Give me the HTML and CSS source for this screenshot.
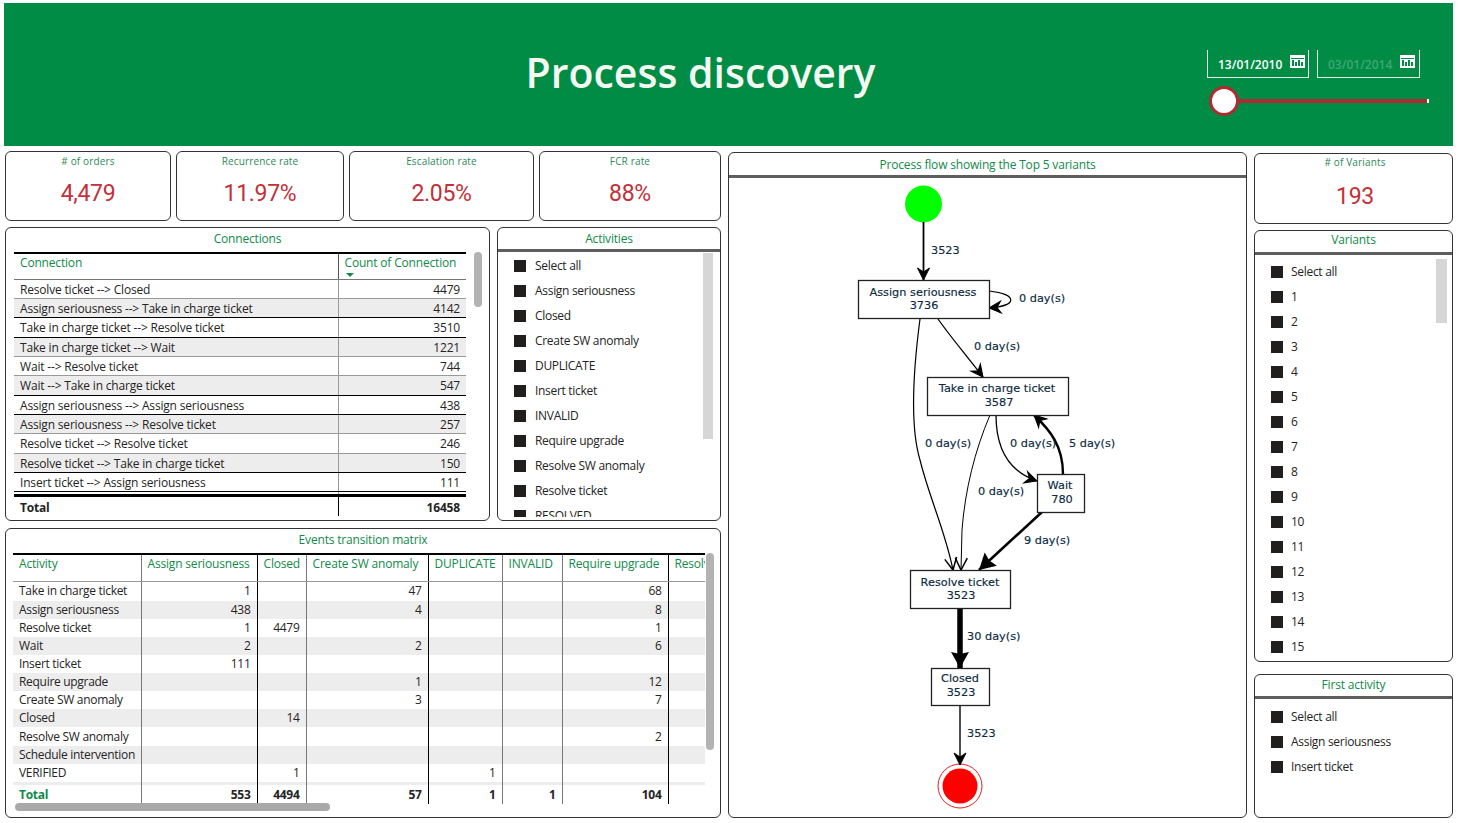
FILE: index.html
```html
<!DOCTYPE html>
<html lang="en">
<head>
    <meta charset="UTF-8">
    <meta name="viewport" content="width=device-width, initial-scale=1.0">
    <title>Process discovery</title>
    <link rel="stylesheet" href="styles.css">
</head>
<body>
    <header class="banner">
        <h1>Process discovery</h1>
        <div class="dates">
            <div class="date-row">
                <div class="date-box">
                    <span>13/01/2010</span>
                    <svg class="cal" viewBox="0 0 15 13"><path fill="#fff" d="M0 0h15v13H0z"/><path fill="#008c45" d="M1 3h13v1H1zM2 5h2v6H2zM5 7h2v4H5zM8 5h2v6H8zM11 7h2v4h-2z"/></svg>
                </div>
                <div class="date-box end">
                    <span>03/01/2014</span>
                    <svg class="cal" viewBox="0 0 15 13"><path fill="#fff" d="M0 0h15v13H0z"/><path fill="#008c45" d="M1 3h13v1H1zM2 5h2v6H2zM5 7h2v4H5zM8 5h2v6H8zM11 7h2v4h-2z"/></svg>
                </div>
            </div>
            <div class="slider"><span class="knob"></span><span class="track"></span><span class="track-end"></span></div>
        </div>
    </header>

    <main class="board">
        <section class="col-left">
            <div class="kpi-row">
                <div class="card kpi w1"><div class="kpi-label">&#35; of orders</div><div class="kpi-value">4,479</div></div>
                <div class="card kpi w2"><div class="kpi-label">Recurrence rate</div><div class="kpi-value">11.97%</div></div>
                <div class="card kpi w3"><div class="kpi-label">Escalation rate</div><div class="kpi-value">2.05%</div></div>
                <div class="card kpi w4"><div class="kpi-label">FCR rate</div><div class="kpi-value">88%</div></div>
            </div>

            <div class="mid-row">
                <div class="card connections">
                    <div class="card-title plain">Connections</div>
                    <table class="conn-table">
                        <thead>
                            <tr><th>Connection</th><th>Count of Connection<i class="sort"></i></th></tr>
                        </thead>
                        <tbody>
                            <tr><td>Resolve ticket --&gt; Closed</td><td>4479</td></tr>
                            <tr><td>Assign seriousness --&gt; Take in charge ticket</td><td>4142</td></tr>
                            <tr><td>Take in charge ticket --&gt; Resolve ticket</td><td>3510</td></tr>
                            <tr><td>Take in charge ticket --&gt; Wait</td><td>1221</td></tr>
                            <tr><td>Wait --&gt; Resolve ticket</td><td>744</td></tr>
                            <tr><td>Wait --&gt; Take in charge ticket</td><td>547</td></tr>
                            <tr><td>Assign seriousness --&gt; Assign seriousness</td><td>438</td></tr>
                            <tr><td>Assign seriousness --&gt; Resolve ticket</td><td>257</td></tr>
                            <tr><td>Resolve ticket --&gt; Resolve ticket</td><td>246</td></tr>
                            <tr><td>Resolve ticket --&gt; Take in charge ticket</td><td>150</td></tr>
                            <tr><td>Insert ticket --&gt; Assign seriousness</td><td>111</td></tr>
                            <tr class="gap"><td></td><td></td></tr>
                        </tbody>
                        <tfoot>
                            <tr><td>Total</td><td>16458</td></tr>
                        </tfoot>
                    </table>
                    <div class="scroll conn-scroll"></div>
                </div>

                <div class="card activities">
                    <div class="card-title">Activities</div>
                    <ul class="slicer">
                        <li>Select all</li>
                        <li>Assign seriousness</li>
                        <li>Closed</li>
                        <li>Create SW anomaly</li>
                        <li>DUPLICATE</li>
                        <li>Insert ticket</li>
                        <li>INVALID</li>
                        <li>Require upgrade</li>
                        <li>Resolve SW anomaly</li>
                        <li>Resolve ticket</li>
                        <li>RESOLVED</li>
                    </ul>
                    <div class="scroll slicer-scroll act-scroll"></div>
                </div>
            </div>

            <div class="card matrix">
                <div class="card-title plain">Events transition matrix</div>
                <div class="matrix-view">
                    <table class="matrix-table">
                        <thead>
                            <tr><th>Activity</th><th>Assign seriousness</th><th>Closed</th><th>Create SW anomaly</th><th>DUPLICATE</th><th>INVALID</th><th>Require upgrade</th><th>Resolve SW anomaly</th></tr>
                        </thead>
                        <tbody>
                            <tr><td>Take in charge ticket</td><td>1</td><td></td><td>47</td><td></td><td></td><td>68</td><td></td></tr>
                            <tr><td>Assign seriousness</td><td>438</td><td></td><td>4</td><td></td><td></td><td>8</td><td></td></tr>
                            <tr><td>Resolve ticket</td><td>1</td><td>4479</td><td></td><td></td><td></td><td>1</td><td></td></tr>
                            <tr><td>Wait</td><td>2</td><td></td><td>2</td><td></td><td></td><td>6</td><td></td></tr>
                            <tr><td>Insert ticket</td><td>111</td><td></td><td></td><td></td><td></td><td></td><td></td></tr>
                            <tr><td>Require upgrade</td><td></td><td></td><td>1</td><td></td><td></td><td>12</td><td></td></tr>
                            <tr><td>Create SW anomaly</td><td></td><td></td><td>3</td><td></td><td></td><td>7</td><td></td></tr>
                            <tr><td>Closed</td><td></td><td>14</td><td></td><td></td><td></td><td></td><td></td></tr>
                            <tr><td>Resolve SW anomaly</td><td></td><td></td><td></td><td></td><td></td><td>2</td><td></td></tr>
                            <tr><td>Schedule intervention</td><td></td><td></td><td></td><td></td><td></td><td></td><td></td></tr>
                            <tr><td>VERIFIED</td><td></td><td>1</td><td></td><td>1</td><td></td><td></td><td></td></tr>
                            <tr class="sliver"><td></td><td></td><td></td><td></td><td></td><td></td><td></td><td></td></tr>
                        </tbody>
                        <tfoot>
                            <tr><td>Total</td><td>553</td><td>4494</td><td>57</td><td>1</td><td>1</td><td>104</td><td></td></tr>
                        </tfoot>
                    </table>
                </div>
                <div class="scroll matrix-v"></div>
                <div class="scroll matrix-h"></div>
            </div>
        </section>

        <section class="card flow">
            <div class="card-title">Process flow showing the Top 5 variants</div>
            <svg class="flow-graph" viewBox="729 178 517 639">
                <defs>
                    <marker id="arrow" markerUnits="userSpaceOnUse" markerWidth="18" markerHeight="18" refX="14" refY="8" orient="auto">
                        <path d="M2 2 L14 8 L2 14 L6 8 Z" fill="#000" stroke="#000" stroke-width="1"/>
                    </marker>
                    <marker id="arrow-open" markerUnits="userSpaceOnUse" markerWidth="18" markerHeight="18" refX="14" refY="8" orient="auto">
                        <path d="M2 2 L14 8 L2 14" fill="none" stroke="#000" stroke-width="1.5"/>
                    </marker>
                    <marker id="arrow-big" markerUnits="userSpaceOnUse" markerWidth="22" markerHeight="22" refX="18" refY="10" orient="auto">
                        <path d="M2 1 L18 10 L2 19 L4 10 Z" fill="#000"/>
                    </marker>
                </defs>

                <circle cx="923.5" cy="204" r="18.5" fill="#00ff00"/>
                <circle cx="960" cy="786" r="22" fill="#fff" stroke="#e02020" stroke-width="1"/>
                <circle cx="960" cy="786" r="17.5" fill="#ff0000"/>

                <g class="edge">
                    <path d="M923.5 222 L923.5 280" stroke-width="1.8" marker-end="url(#arrow)"/>
                    <path d="M989 291 C1018 294 1018 306 989 308" stroke-width="1.2" marker-end="url(#arrow)"/>
                    <path d="M938 319 C950 336 962 350 983 377" stroke-width="1.3" marker-end="url(#arrow)"/>
                    <path d="M920 319 C912 380 911 430 920 460 C930 500 945 530 953 570" stroke-width="1.2" marker-end="url(#arrow-open)"/>
                    <path d="M990 415 C975 450 965 490 962 530 L961 570" stroke-width="1" marker-end="url(#arrow-open)"/>
                    <path d="M996 415 C996 450 1010 472 1037 481" stroke-width="1.3" marker-end="url(#arrow)"/>
                    <path d="M1063 474 C1063 446 1050 430 1034 415" stroke-width="2.4" marker-end="url(#arrow)"/>
                    <path d="M1042 512 L979 570" stroke-width="2.6" marker-end="url(#arrow-big)"/>
                    <path d="M960 608 L960 668" stroke-width="5.5" marker-end="url(#arrow-big)"/>
                    <path d="M960 705 L960 765" stroke-width="1.4" marker-end="url(#arrow)"/>
                </g>

                <g class="node">
                    <rect x="858.5" y="280.5" width="131" height="38"/>
                    <rect x="927.5" y="377.5" width="141" height="38"/>
                    <rect x="1037.5" y="474.5" width="47" height="38"/>
                    <rect x="910.5" y="570.5" width="100" height="38"/>
                    <rect x="931.5" y="668.5" width="58" height="37"/>
                </g>

                <g class="node-text">
                    <text x="923" y="296">Assign seriousness</text>
                    <text x="924" y="309">3736</text>
                    <text x="997" y="392">Take in charge ticket</text>
                    <text x="999" y="406">3587</text>
                    <text x="1060" y="489">Wait</text>
                    <text x="1062" y="503">780</text>
                    <text x="960" y="586">Resolve ticket</text>
                    <text x="961" y="599">3523</text>
                    <text x="960" y="682">Closed</text>
                    <text x="961" y="696">3523</text>
                </g>

                <g class="edge-text">
                    <text x="931" y="254">3523</text>
                    <text x="1019" y="302">0 day(s)</text>
                    <text x="974" y="350">0 day(s)</text>
                    <text x="925" y="447">0 day(s)</text>
                    <text x="1010" y="447">0 day(s)</text>
                    <text x="1069" y="447">5 day(s)</text>
                    <text x="978" y="495">0 day(s)</text>
                    <text x="1024" y="544">9 day(s)</text>
                    <text x="967" y="640">30 day(s)</text>
                    <text x="967" y="737">3523</text>
                </g>
            </svg>
        </section>

        <section class="col-right">
            <div class="card kpi kpi-right"><div class="kpi-label">&#35; of Variants</div><div class="kpi-value">193</div></div>

            <div class="card variants">
                <div class="card-title">Variants</div>
                <ul class="slicer">
                    <li>Select all</li>
                    <li>1</li>
                    <li>2</li>
                    <li>3</li>
                    <li>4</li>
                    <li>5</li>
                    <li>6</li>
                    <li>7</li>
                    <li>8</li>
                    <li>9</li>
                    <li>10</li>
                    <li>11</li>
                    <li>12</li>
                    <li>13</li>
                    <li>14</li>
                    <li>15</li>
                </ul>
                <div class="scroll slicer-scroll var-scroll"></div>
            </div>

            <div class="card first-activity">
                <div class="card-title">First activity</div>
                <ul class="slicer">
                    <li>Select all</li>
                    <li>Assign seriousness</li>
                    <li>Insert ticket</li>
                </ul>
            </div>
        </section>
    </main>
</body>
</html>
```

FILE: styles.css
```css
* {
    box-sizing: border-box;
}

body {
    margin: 0;
    background-color: #fff;
    font-family: "Open Sans", "Noto Sans", sans-serif;
    font-size: 12px;
    letter-spacing: -0.18px;
    color: #252423;
    overflow: hidden;
}

/* banner */
.banner {
    display: flex;
    align-items: flex-start;
    height: 143px;
    margin: 3px 7px 0 4px;
    background-color: #008c45;
}

.banner h1 {
    flex: 1;
    margin: 0;
    padding: 40px 0 0 190px;
    font-size: 41px;
    line-height: 58px;
    font-weight: 600;
    letter-spacing: 0;
    text-align: center;
    color: #f4f9f2;
}

.dates {
    width: 246px;
    padding-top: 47px;
}

.date-row {
    display: flex;
    gap: 8px;
}

.date-box {
    display: flex;
    align-items: flex-start;
    justify-content: space-between;
    width: 102px;
    height: 28px;
    padding: 5px 3px 0 10px;
    border: 1px solid #e8f3ec;
    border-top: none;
    font-weight: 600;
    letter-spacing: 0;
    line-height: 20px;
    color: #fff;
}

.date-box.end {
    width: 103px;
    padding-right: 4px;
    color: #40a673;
}

.cal {
    width: 15px;
    height: 13px;
    flex: none;
}

.slider {
    position: relative;
    height: 30px;
    margin-top: 8px;
}

.knob {
    position: absolute;
    left: 2px;
    top: 0;
    width: 30px;
    height: 30px;
    border: 3px solid #b02a30;
    border-radius: 50%;
    background-color: #fff;
    z-index: 1;
}

.track {
    position: absolute;
    left: 20px;
    top: 13px;
    width: 200px;
    height: 4px;
    background-color: #ab2c30;
}

.track-end {
    position: absolute;
    left: 220px;
    top: 13px;
    width: 2px;
    height: 4px;
    background-color: #fff;
}

/* board */
.board {
    display: grid;
    grid-template-columns: 716px 519px 199px;
    column-gap: 7px;
    padding: 5px 0 0 5px;
}

.card {
    position: relative;
    background-color: #fff;
    border: 1px solid #333;
    border-radius: 6px;
}

.card-title {
    height: 24px;
    border-bottom: 3px solid #605e5c;
    text-align: center;
    line-height: 21px;
    color: #118a4a;
}

.card-title.plain {
    border-bottom: none;
}

.col-left {
    display: flex;
    flex-direction: column;
}

.kpi-row {
    display: flex;
    justify-content: space-between;
    height: 70px;
}

.kpi {
    text-align: center;
}

.w1 { width: 166px; }
.w2 { width: 168px; }
.w3 { width: 185px; }
.w4 { width: 182px; }

.kpi-label {
    margin-top: 2px;
    font-size: 10px;
    letter-spacing: 0.15px;
    line-height: 14px;
    color: #2c8a58;
}

.kpi-value {
    margin-top: 10px;
    font-family: Roboto, sans-serif;
    font-size: 23px;
    letter-spacing: -0.3px;
    line-height: 32px;
    color: #c4303a;
}

.mid-row {
    display: flex;
    gap: 7px;
    height: 294px;
    margin-top: 6px;
}

/* connections table */
.connections {
    width: 485px;
}

.conn-table,
.matrix-table {
    table-layout: fixed;
    border-collapse: collapse;
}

.conn-table {
    width: 452px;
    margin-left: 8px;
    border-top: 2px solid #000;
}

.conn-table th,
.matrix-table th {
    font-weight: 400;
    text-align: left;
    vertical-align: top;
    color: #118a4a;
}

.conn-table th {
    position: relative;
    height: 26px;
    padding: 0 6px;
    line-height: 18px;
    border-bottom: 1px solid #777;
}

.conn-table th:first-child {
    width: 324px;
}

.conn-table th + th {
    border-left: 1px solid #555;
}

.sort {
    position: absolute;
    left: 7px;
    top: 19px;
    width: 0;
    height: 0;
    border-left: 4px solid transparent;
    border-right: 4px solid transparent;
    border-top: 4px solid #118a4a;
}

.conn-table td {
    height: 19px;
    padding: 1px 6px 0;
    line-height: 17px;
    white-space: nowrap;
    border-bottom: 1px solid #999;
}

.conn-table tbody tr:nth-child(3n) td {
    height: 20px;
}

.conn-table td + td {
    text-align: right;
    border-left: 1px solid #999;
}

.conn-table tbody tr:nth-child(even) td {
    background-color: #eeedee;
}

.conn-table tbody tr:nth-child(4n+2) td,
.conn-table tbody tr:nth-child(4n+3) td {
    border-bottom-color: #000;
}

.conn-table tbody tr.gap td {
    height: 4px;
    padding: 0;
    line-height: 0;
    background-color: #fff;
    border-bottom: none;
}

.conn-table tfoot td {
    height: 21px;
    padding-top: 2px;
    border-top: 3px solid #000;
    border-bottom: none;
    font-weight: 700;
}

.conn-table tfoot td + td {
    border-left-color: #000;
}

.scroll {
    position: absolute;
    background-color: #b3b3b3;
    border-radius: 4px;
}

.conn-scroll {
    left: 468px;
    top: 24px;
    width: 8px;
    height: 55px;
}

.slicer-scroll {
    background-color: #d6d6d6;
    border-radius: 0;
}

.act-scroll {
    left: 205px;
    top: 25px;
    width: 10px;
    height: 186px;
}

/* slicers */
.activities {
    width: 224px;
}

.slicer {
    margin: 0;
    padding: 1px 0 0 16px;
    list-style: none;
    letter-spacing: -0.3px;
    overflow: hidden;
}

.slicer li {
    display: flex;
    align-items: center;
    height: 25px;
    white-space: nowrap;
}

.slicer li::before {
    content: "";
    flex: none;
    width: 12px;
    height: 12px;
    margin-right: 9px;
    background-color: #201f1e;
}

.activities .slicer {
    height: 265px;
}

/* matrix */
.matrix {
    height: 290px;
    margin-top: 7px;
}

.matrix-view {
    width: 692px;
    margin-left: 7px;
    overflow: hidden;
}

.matrix-table {
    width: 785px;
    border-top: 2px solid #000;
}

.matrix-table th {
    height: 27px;
    padding: 0 6px;
    line-height: 18px;
    white-space: nowrap;
    border-bottom: 1px solid #999;
}

.matrix-table th:nth-child(1) { width: 128px; }
.matrix-table th:nth-child(2) { width: 116px; }
.matrix-table th:nth-child(3) { width: 49px; }
.matrix-table th:nth-child(4) { width: 122px; }
.matrix-table th:nth-child(5) { width: 74px; }
.matrix-table th:nth-child(6) { width: 60px; }
.matrix-table th:nth-child(7) { width: 106px; }
.matrix-table th:nth-child(8) { width: 130px; }

.matrix-table td {
    height: 18px;
    padding: 0 6px;
    letter-spacing: -0.3px;
    line-height: 18px;
    text-align: right;
    white-space: nowrap;
}

.matrix-table tbody tr:first-child td {
    height: 20px;
}

.matrix-table tbody tr:nth-child(9) td {
    height: 19px;
}

.matrix-table td:first-child {
    text-align: left;
}

.matrix-table th + th,
.matrix-table td + td {
    border-left: 1px solid #777;
}

.matrix-table tr > :nth-child(3),
.matrix-table tr > :nth-child(5),
.matrix-table tr > :nth-child(8) {
    border-left-color: #000;
}

.matrix-table tbody tr:nth-child(even) td {
    background-color: #eeedee;
}

.matrix-table .sliver td {
    height: 3px;
    line-height: 0;
}

.matrix-table tfoot td {
    height: 19px;
    font-weight: 700;
}

.matrix-table tfoot td:first-child {
    color: #118a4a;
}

.matrix-v {
    left: 700px;
    top: 24px;
    width: 8px;
    height: 197px;
}

.matrix-h {
    left: 9px;
    top: 274px;
    width: 315px;
    height: 8px;
    background-color: #a9a9a9;
}

/* process graph */
.flow {
    height: 666px;
    margin-top: 1px;
}

.flow .card-title {
    height: 25px;
    line-height: 24px;
}

.flow-graph {
    display: block;
    width: 517px;
    height: 639px;
}

.edge path {
    fill: none;
    stroke: #000;
}

.node rect {
    fill: #fff;
    stroke: #222;
    stroke-width: 1.3;
}

.node-text text,
.edge-text text {
    font-family: "DejaVu Sans", sans-serif;
    font-size: 11.3px;
    letter-spacing: 0;
    fill: #0c2a40;
    stroke: #0c2a40;
    stroke-width: 0.15;
}

.node-text text {
    text-anchor: middle;
}

/* right column */
.col-right {
    display: flex;
    flex-direction: column;
    margin-top: 2px;
}

.kpi-right {
    height: 71px;
    padding-left: 3px;
}

.kpi-right .kpi-label {
    margin-top: 1px;
}

.kpi-right .kpi-value {
    margin-top: 12px;
}

.variants {
    height: 432px;
    margin-top: 6px;
}

.variants .card-title {
    line-height: 18px;
}

.first-activity .card-title {
    line-height: 19px;
}

.variants .slicer {
    height: 405px;
    padding-top: 4px;
}

.var-scroll {
    left: 181px;
    top: 28px;
    width: 11px;
    height: 64px;
}

.variants .slicer li::before,
.first-activity .slicer li::before {
    margin-right: 8px;
}

.first-activity {
    height: 144px;
    margin-top: 12px;
}

.first-activity .slicer {
    padding-top: 5px;
}
```
